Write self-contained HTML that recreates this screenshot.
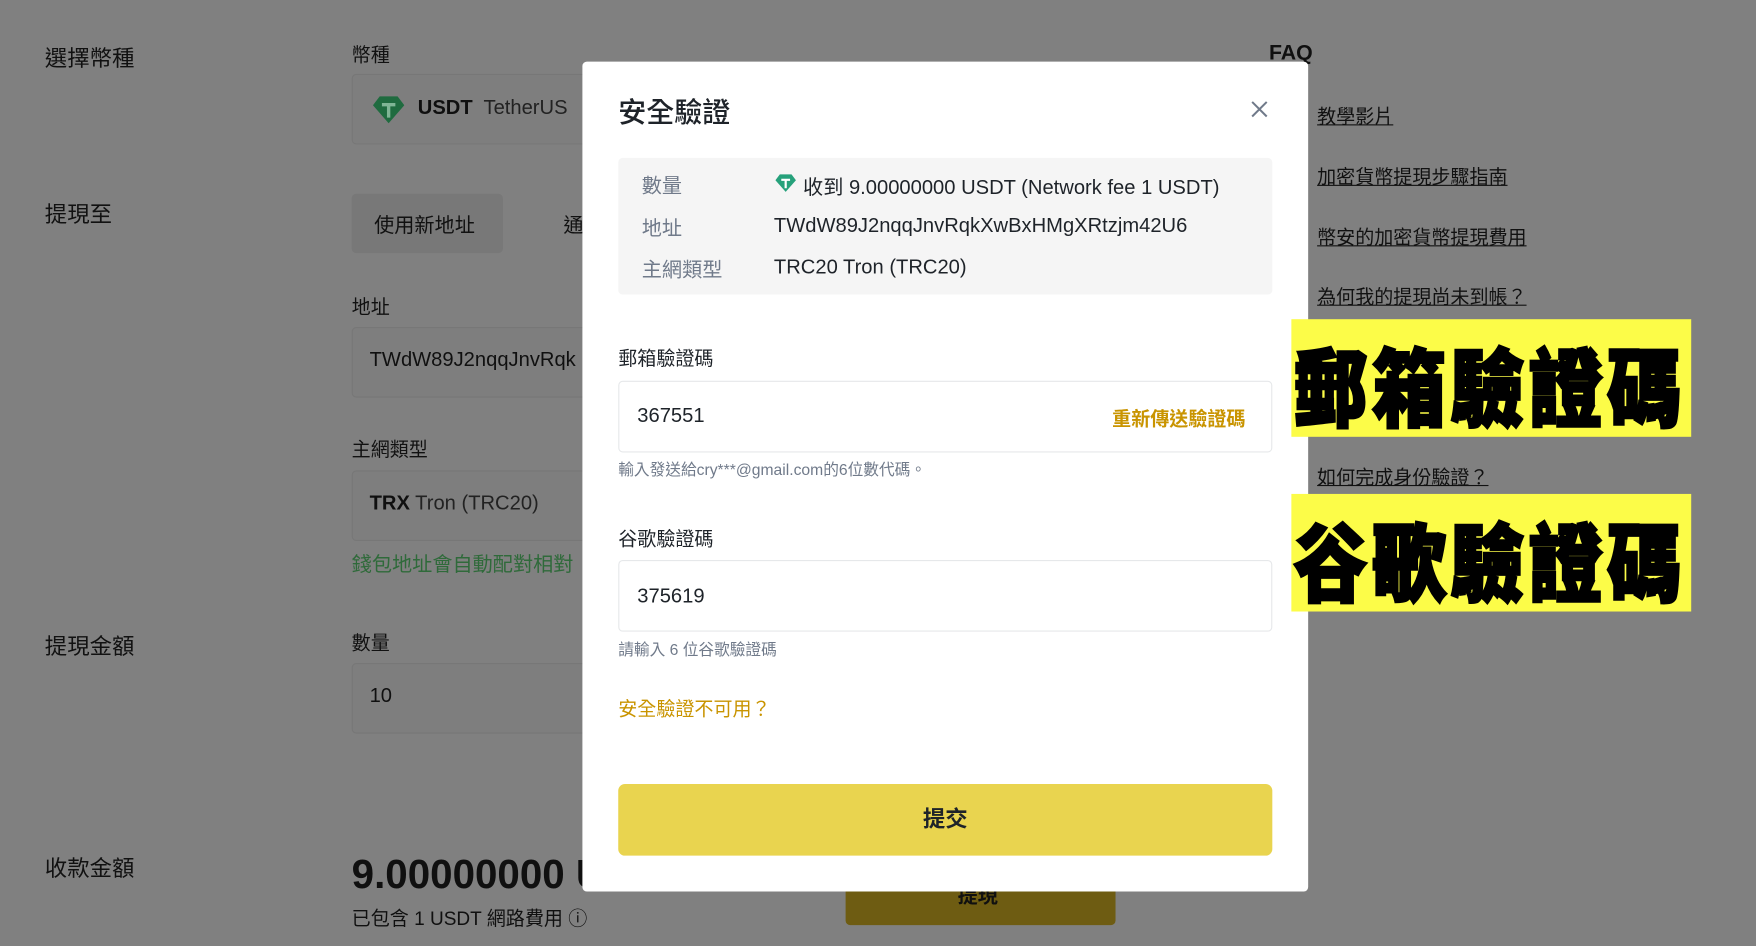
<!DOCTYPE html>
<html><head><meta charset="utf-8"><style>
html,body{margin:0;padding:0;width:1756px;height:946px;overflow:hidden;background:#808080}
#s{position:absolute;left:0;top:0;width:1568px;height:845px;transform:scale(1.12);transform-origin:0 0;font-family:"Liberation Sans","Noto Sans CJK TC",sans-serif;color:#101010}
.a{position:absolute;white-space:nowrap}
.lb{font-size:20px;color:#111}
.fl{font-size:17px;color:#111}
.box{position:absolute;background:#7e7e7e;border:1px solid #777;border-radius:4px}
.faq{font-size:17px;text-decoration:underline;color:#111}
.yl{position:absolute;background:#fcfc48;overflow:hidden}
.yl span{position:absolute;left:2px;top:20px;font-size:66px;font-weight:900;color:#000;letter-spacing:4px;transform:scaleY(1.15);transform-origin:0 0;-webkit-text-stroke:2px #000;font-family:"Noto Sans CJK TC",sans-serif;line-height:1}
.m{position:absolute;left:520px;top:55px;width:648px;height:741px;background:#fff;border-radius:4px}
.k{font-size:18px;color:#707a8a}
.v{font-size:18px;color:#1e2329}
.inp{position:absolute;left:32px;width:582px;height:62px;border:1px solid #e6e8ea;border-radius:4px}
</style></head><body><div id="s">
<div class="a lb" style="left:40px;top:36px">選擇幣種</div>
<div class="a lb" style="left:40px;top:175px">提現至</div>
<div class="a lb" style="left:40px;top:561px">提現金額</div>
<div class="a lb" style="left:40px;top:759px">收款金額</div>
<div class="a fl" style="left:314px;top:35px">幣種</div>
<div class="box" style="left:314px;top:66px;width:260px;height:61px"></div>
<svg class="a" style="left:333px;top:85px" width="28" height="26" viewBox="0 0 28 26"><path d="M6 1h16l6 8-14 16L0 9z" fill="#1f6b3f"/><path d="M8 7h12v3h-4.5v10h-3V10H8z" fill="#7fb595"/></svg>
<div class="a" style="left:373px;top:86px;font-size:18px"><b>USDT</b>&nbsp; <span style="color:#222">TetherUS</span></div>
<div class="a" style="left:314px;top:173px;width:135px;height:53px;background:#787878;border-radius:4px"></div>
<div class="a fl" style="left:334px;top:187px;font-size:18px">使用新地址</div>
<div class="a fl" style="left:503px;top:187px;font-size:18px">通</div>
<div class="a fl" style="left:314px;top:260px">地址</div>
<div class="box" style="left:314px;top:292px;width:260px;height:61px"></div>
<div class="a" style="left:330px;top:311px;font-size:18px">TWdW89J2nqqJnvRqk</div>
<div class="a fl" style="left:314px;top:387px">主網類型</div>
<div class="box" style="left:314px;top:420px;width:260px;height:61px"></div>
<div class="a" style="left:330px;top:439px;font-size:18px"><b>TRX</b> <span style="color:#222">Tron (TRC20)</span></div>
<div class="a" style="left:314px;top:490px;font-size:18px;color:#2f6a3a">錢包地址會自動配對相對</div>
<div class="a fl" style="left:314px;top:560px">數量</div>
<div class="box" style="left:314px;top:592px;width:260px;height:61px"></div>
<div class="a" style="left:330px;top:611px;font-size:18px">10</div>
<div class="a" style="left:314px;top:760px;font-size:36px;font-weight:bold">9.00000000 U</div>
<div class="a" style="left:314px;top:806px;font-size:17px">已包含 1 USDT 網路費用 ⓘ</div>
<div class="a" style="left:755px;top:790px;width:241px;height:36px;background:#6e5c12;border-radius:4px"></div>
<div class="a" style="left:855px;top:786px;font-size:18px;font-weight:bold">提現</div>
<div class="a" style="left:1133px;top:37px;font-size:19px;font-weight:bold">FAQ</div>
<div class="a faq" style="left:1176px;top:90px">教學影片</div>
<div class="a faq" style="left:1176px;top:144px">加密貨幣提現步驟指南</div>
<div class="a faq" style="left:1176px;top:198px">幣安的加密貨幣提現費用</div>
<div class="a faq" style="left:1176px;top:251px">為何我的提現尚未到帳？</div>
<div class="a faq" style="left:1176px;top:412px">如何完成身份驗證？</div>
<div class="m">
<div class="a" style="left:32px;top:26px;font-size:25px;font-weight:500;color:#1e2329">安全驗證</div>
<svg class="a" style="left:597px;top:35px" width="15" height="15" viewBox="0 0 15 15"><path d="M1 1L14 14M14 1L1 14" stroke="#707a8a" stroke-width="1.8"/></svg>
<div class="a" style="left:32px;top:86px;width:584px;height:122px;background:#f5f5f5;border-radius:4px"></div>
<div class="a k" style="left:53px;top:97px">數量</div>
<div class="a k" style="left:53px;top:135px">地址</div>
<div class="a k" style="left:53px;top:172px">主網類型</div>
<svg class="a" style="left:172px;top:100px" width="19" height="17" viewBox="0 0 28 26"><path d="M6 1h16l6 8-14 16L0 9z" fill="#26a17b"/><path d="M8 7h12v3h-4.5v10h-3V10H8z" fill="#fff"/></svg>
<div class="a v" style="left:197px;top:98px">收到 9.00000000 USDT (Network fee 1 USDT)</div>
<div class="a v" style="left:171px;top:136px">TWdW89J2nqqJnvRqkXwBxHMgXRtzjm42U6</div>
<div class="a v" style="left:171px;top:173px">TRC20 Tron (TRC20)</div>
<div class="a" style="left:32px;top:251px;font-size:17px;color:#1e2329">郵箱驗證碼</div>
<div class="inp" style="top:285px"></div>
<div class="a v" style="left:49px;top:306px">367551</div>
<div class="a" style="left:473px;top:305px;font-size:17px;font-weight:bold;color:#c99400">重新傳送驗證碼</div>
<div class="a" style="left:32px;top:354px;font-size:14px;color:#707a8a">輸入發送給cry***@gmail.com的6位數代碼。</div>
<div class="a" style="left:32px;top:412px;font-size:17px;color:#1e2329">谷歌驗證碼</div>
<div class="inp" style="top:445px"></div>
<div class="a v" style="left:49px;top:467px">375619</div>
<div class="a" style="left:32px;top:515px;font-size:14px;color:#707a8a">請輸入 6 位谷歌驗證碼</div>
<div class="a" style="left:32px;top:564px;font-size:17px;color:#c99400">安全驗證不可用？</div>
<div class="a" style="left:32px;top:645px;width:584px;height:64px;background:#e9d44f;border-radius:6px;text-align:center;line-height:64px;font-size:20px;font-weight:bold;color:#1e2329">提交</div>
</div>
<div class="yl" style="left:1153px;top:285px;width:357px;height:105px"><span>郵箱驗證碼</span></div>
<div class="yl" style="left:1153px;top:441px;width:357px;height:105px"><span>谷歌驗證碼</span></div>
</div></body></html>
